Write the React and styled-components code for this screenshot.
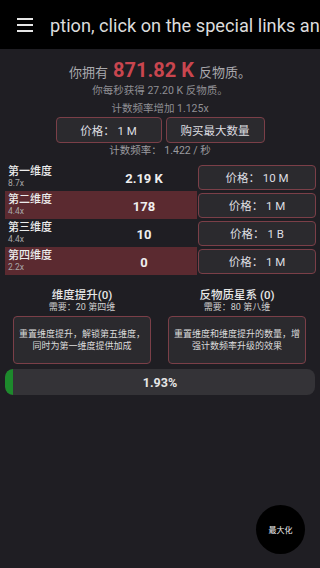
import React from 'react';
import styled, { createGlobalStyle } from 'styled-components';

const GlobalStyle = createGlobalStyle`
  html, body {
    margin: 0;
    padding: 0;
    background: #1f1e23;
    font-family: Roboto, "Noto Sans CJK SC", sans-serif;
  }
  * { box-sizing: border-box; }
`;

const Page = styled.div`
  width: 320px;
  height: 568px;
  background: #1f1e23;
  color: #e0e0e0;
  position: relative;
  overflow: hidden;
`;

const Header = styled.div`
  height: 49px;
  background: #000;
  display: flex;
  align-items: center;
  padding-left: 17px;
  gap: 17px;
  overflow: hidden;
  white-space: nowrap;
`;

const Menu = styled.div`
  width: 16px;
  display: flex;
  flex-direction: column;
  gap: 4px;
  flex-shrink: 0;
  span {
    height: 2px;
    background: #e6e6e6;
  }
`;

const News = styled.div`
  font-size: 18.2px;
  color: #dcdcdc;
  margin-top: 1px;
`;

const Top = styled.div`
  display: flex;
  flex-direction: column;
  align-items: center;
  padding-top: 9px;
`;

const Owned = styled.div`
  font-size: 13px;
  color: #a9a9ad;
  display: flex;
  align-items: baseline;
  gap: 5px;
  b {
    font-size: 20px;
    color: #c9464f;
    font-weight: 700;
  }
`;

const Note = styled.div`
  font-size: 10.5px;
  color: ${(p) => p.$color || '#8f8f94'};
  margin-top: ${(p) => p.$mt || 0}px;
  line-height: 13px;
`;

const ButtonRow = styled.div`
  display: flex;
  gap: 4px;
  margin-top: 2px;
`;

const Btn = styled.div`
  width: ${(p) => p.$w}px;
  height: ${(p) => p.$h || 26}px;
  border: 1px solid #7b3f48;
  border-radius: 4px;
  background: #2b2a2e;
  color: #dddde0;
  font-size: 11.5px;
  display: flex;
  align-items: center;
  justify-content: center;
`;

const Dims = styled.div`
  display: flex;
  flex-direction: column;
  margin-top: 6px;
  padding: 0 4px 0 5px;
`;

const DimRow = styled.div`
  display: flex;
  align-items: center;
  height: 28px;
`;

const DimInfo = styled.div`
  width: 192px;
  height: 28px;
  display: flex;
  align-items: center;
  background: ${(p) => (p.$hl ? '#5b2a30' : 'transparent')};
  padding-left: 3px;
`;

const DimName = styled.div`
  width: 100px;
  display: flex;
  flex-direction: column;
  line-height: 1;
  strong {
    font-size: 11px;
    font-weight: 500;
    color: #ececec;
  }
  small {
    font-size: 8.5px;
    color: #a8a8a8;
    margin-top: 2px;
  }
`;

const DimAmount = styled.div`
  width: 72px;
  text-align: center;
  font-size: 13px;
  font-weight: 700;
  color: #efefef;
  margin-top: 2px;
`;

const DimBtn = styled(Btn)`
  margin-left: 1px;
  flex: 1;
`;

const Prestige = styled.div`
  display: flex;
  justify-content: space-between;
  padding: 13px 14px 0 13px;
`;

const PrestigeCol = styled.div`
  width: 138px;
  display: flex;
  flex-direction: column;
  align-items: center;
`;

const PTitle = styled.div`
  font-size: 11.5px;
  line-height: 14px;
  color: #e8e8e8;
  font-weight: 500;
`;

const PReq = styled.div`
  font-size: 9px;
  line-height: 11px;
  color: #cfcfcf;
`;

const PBox = styled.div`
  width: 138px;
  height: 48px;
  margin-top: 3px;
  border: 1px solid #7b3f48;
  border-radius: 4px;
  background: #2b2a2e;
  font-size: 9px;
  color: #dcdcdc;
  line-height: 12px;
  display: flex;
  align-items: center;
  justify-content: center;
  text-align: center;
  padding: 0 3px;
`;

const Progress = styled.div`
  margin: 5px 5px 0 5px;
  height: 26px;
  border-radius: 8px;
  background: #343337;
  position: relative;
  display: flex;
  align-items: center;
  justify-content: center;
  overflow: hidden;
  font-size: 12.5px;
  font-weight: 700;
  color: #e6e6e6;
`;

const Fill = styled.div`
  position: absolute;
  left: 0;
  top: 0;
  bottom: 0;
  background: #1d8a2c;
  border-radius: 8px 0 0 8px;
`;

const Label = styled.span`
  position: relative;
`;

const MaxBtn = styled.div`
  position: absolute;
  left: 256px;
  top: 505px;
  width: 49px;
  height: 49px;
  border-radius: 50%;
  background: #000;
  color: #f0f0f0;
  font-size: 8px;
  display: flex;
  align-items: center;
  justify-content: center;
`;

const dims = [
  { name: '第一维度', mult: '8.7x', amount: '2.19 K', price: '10 M', hl: false },
  { name: '第二维度', mult: '4.4x', amount: '178', price: '1 M', hl: true },
  { name: '第三维度', mult: '4.4x', amount: '10', price: '1 B', hl: false },
  { name: '第四维度', mult: '2.2x', amount: '0', price: '1 M', hl: true },
];

export default function App() {
  return (
    <Page>
      <GlobalStyle />
      <Header>
        <Menu>
          <span />
          <span />
          <span />
        </Menu>
        <News>ption, click on the special links and</News>
      </Header>
      <Top>
        <Owned>
          你拥有 <b>871.82 K</b> 反物质。
        </Owned>
        <Note $mt={2}>你每秒获得 27.20 K 反物质。</Note>
        <Note $mt={5}>计数频率增加 1.125x</Note>
        <ButtonRow>
          <Btn $w={106}>价格： 1 M</Btn>
          <Btn $w={99}>购买最大数量</Btn>
        </ButtonRow>
        <Note $mt={1} $color="#9a9a9f">计数频率： 1.422 / 秒</Note>
      </Top>
      <Dims>
        {dims.map((d) => (
          <DimRow key={d.name}>
            <DimInfo $hl={d.hl}>
              <DimName>
                <strong>{d.name}</strong>
                <small>{d.mult}</small>
              </DimName>
              <DimAmount>{d.amount}</DimAmount>
            </DimInfo>
            <DimBtn $h={25}>价格： {d.price}</DimBtn>
          </DimRow>
        ))}
      </Dims>
      <Prestige>
        <PrestigeCol>
          <PTitle>维度提升(0)</PTitle>
          <PReq>需要：20 第四维</PReq>
          <PBox>重置维度提升，解锁第五维度，同时为第一维度提供加成</PBox>
        </PrestigeCol>
        <PrestigeCol>
          <PTitle>反物质星系 (0)</PTitle>
          <PReq>需要：80 第八维</PReq>
          <PBox>重置维度和维度提升的数量，增强计数频率升级的效果</PBox>
        </PrestigeCol>
      </Prestige>
      <Progress>
        <Fill style={{ width: `${Math.max(1.93 * 1.3, 2.6)}%` }} />
        <Label>1.93%</Label>
      </Progress>
      <MaxBtn>最大化</MaxBtn>
    </Page>
  );
}
